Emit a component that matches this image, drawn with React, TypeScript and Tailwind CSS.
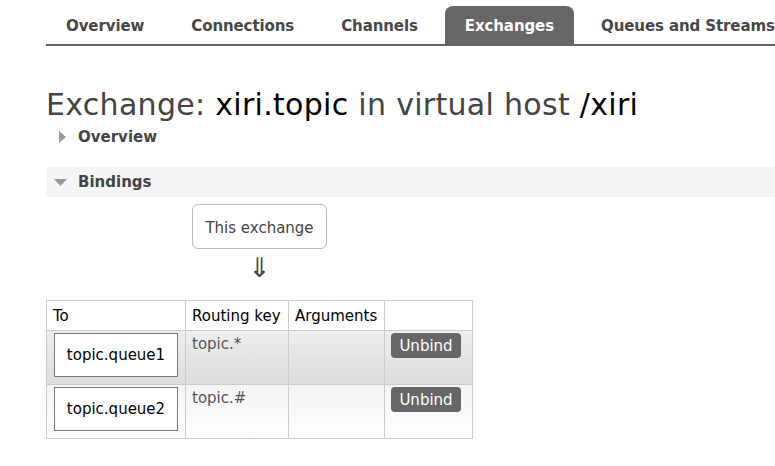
import React from 'react';

const tabs = ['Overview', 'Connections', 'Channels', 'Exchanges', 'Queues and Streams'];

const Triangle: React.FC<{ down?: boolean }> = ({ down }) =>
  down ? (
    <svg width="13" height="7" viewBox="0 0 13 7" className="shrink-0">
      <polygon points="0,0 13,0 6.5,7" fill="#999" />
    </svg>
  ) : (
    <svg width="7" height="12" viewBox="0 0 7 12" className="shrink-0">
      <polygon points="0,0 7,6 0,12" fill="#999" />
    </svg>
  );

const rows = [
  { queue: 'topic.queue1', key: 'topic.*', bg: 'bg-gradient-to-b from-[#eeeeee] to-[#dcdcdc]' },
  { queue: 'topic.queue2', key: 'topic.#', bg: 'bg-gradient-to-b from-[#f4f4f4] to-[#ffffff]' },
];

const App: React.FC = () => {
  return (
    <div className="w-[775px] h-[466px] overflow-hidden bg-white text-[#444] font-['DejaVu_Sans',Verdana,sans-serif]">
      {/* Tabs */}
      <div className="ml-[46px] mt-[6px] flex gap-[7px] border-b-[2px] border-[#666] h-[40px] items-stretch whitespace-nowrap">
        {tabs.map(t => (
          <div
            key={t}
            className={
              t === 'Exchanges'
                ? 'px-[20px] pt-[3px] flex items-center rounded-t-[8px] bg-[#666] text-white text-[15px] tracking-[-0.1px] font-bold'
                : 'px-[20px] pt-[3px] flex items-center text-[15px] tracking-[-0.1px] font-bold text-[#484848]'
            }
          >
            {t}
          </div>
        ))}
      </div>

      {/* Header */}
      <h1 className="ml-[46px] mt-[42px] text-[30px] tracking-[0.3px] leading-[34px] text-[#444] whitespace-nowrap">
        Exchange: <span className="text-black">xiri.topic</span> in virtual host <span className="text-black">/xiri</span>
      </h1>

      {/* Overview section */}
      <div className="ml-[59px] mt-[4px] flex items-center gap-[12px] h-[22px]">
        <Triangle />
        <span className="text-[15px] font-bold">Overview</span>
      </div>

      {/* Bindings section */}
      <div className="ml-[46px] mt-[19px] h-[30px] bg-[#f5f5f5] flex items-center pl-[8px] gap-[11px]">
        <Triangle down />
        <span className="text-[15px] font-bold">Bindings</span>
      </div>

      <div className="ml-[46px]">
        <div className="flex flex-col items-center w-[227px] ml-[100px]">
          <div className="mt-[7px] pt-[3px] border border-[#bbb] rounded-[6px] w-[135px] h-[45px] flex items-center justify-center text-[15px] text-[#444]">
            This exchange
          </div>
          <div className="text-[27px] leading-[30px] mt-[4px] text-[#444]">⇓</div>
        </div>

        <table className="mt-[17px] border-collapse text-[15px]">
          <thead>
            <tr className="h-[30px]">
              <th className="border border-[#ccc] w-[138px] text-left font-normal text-black px-[6px] pt-[2px]">To</th>
              <th className="border border-[#ccc] w-[103px] text-left font-normal text-black px-[6px] pt-[2px]">Routing key</th>
              <th className="border border-[#ccc] w-[96px] text-left font-normal text-black px-[6px] pt-[2px]">Arguments</th>
              <th className="border border-[#ccc] w-[88px]"></th>
            </tr>
          </thead>
          <tbody>
            {rows.map(r => (
              <tr key={r.queue} className={`h-[54px] ${r.bg}`}>
                <td className="border border-[#ccc] px-[7px] align-top pt-[2px]">
                  <div className="w-[124px] h-[44px] pt-[1px] bg-white border border-[#777] flex items-center justify-center text-black">
                    {r.queue}
                  </div>
                </td>
                <td className="border border-[#ccc] px-[6px] align-top pt-[2px] text-[#555]">{r.key}</td>
                <td className="border border-[#ccc]"></td>
                <td className="border border-[#ccc] px-[6px] align-top pt-[2px]">
                  <div className="w-[70px] h-[25px] pt-[1px] rounded-[4px] bg-[#666] text-white text-[15px] flex items-center justify-center">
                    Unbind
                  </div>
                </td>
              </tr>
            ))}
          </tbody>
        </table>
      </div>
    </div>
  );
};

export default App;
